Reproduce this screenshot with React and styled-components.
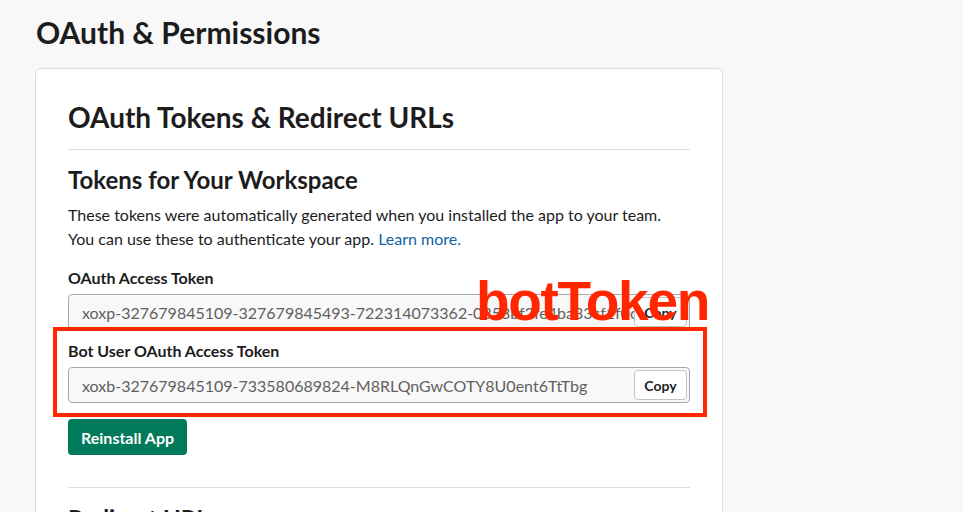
import styled, { createGlobalStyle } from 'styled-components';

const Global = createGlobalStyle`
  html, body {
    margin: 0;
    background: #f8f8f8;
  }
  body {
    font-family: Lato, "Noto Sans", sans-serif;
    color: #1d1c1d;
    -webkit-font-smoothing: antialiased;
  }
`;

const Page = styled.div`
  padding: 12px 36px 0 35px;
  height: 512px;
  box-sizing: border-box;
  overflow: hidden;
`;

const Title = styled.h1`
  margin: 0 0 16px 1px;
  font-size: 30px;
  font-weight: 700;
  line-height: 40px;
  letter-spacing: 0;
`;

const Card = styled.div`
  width: 688px;
  box-sizing: border-box;
  background: #fff;
  border: 1px solid #dddddd;
  border-radius: 6px;
  padding: 26px 32px 0 32px;
`;

const CardTitle = styled.h2`
  margin: 0;
  font-size: 28px;
  font-weight: 700;
  line-height: 44px;
  padding-bottom: 10px;
  border-bottom: 1px solid #dddddd;
`;

const SectionTitle = styled.h3`
  margin: 13px 0 6px;
  font-size: 24px;
  font-weight: 700;
  line-height: 34px;
`;

const Text = styled.p`
  margin: 0 0 16px;
  font-size: 16px;
  line-height: 24px;
`;

const Link = styled.a`
  color: #1264a3;
  text-decoration: none;
`;

const Field = styled.div`
  position: relative;
  margin-bottom: ${p => p.$gap || 0}px;
`;

const Label = styled.div`
  font-size: 16px;
  font-weight: 700;
  line-height: 22px;
  margin-bottom: 5px;
`;

const TokenBox = styled.div`
  position: relative;
  height: 36px;
  box-sizing: border-box;
  border: 1px solid #a8a8a8;
  border-radius: 4px;
  background: #f8f8f8;
  display: flex;
  align-items: center;
  padding: 0 70px 0 13px;
  overflow: hidden;
`;

const TokenText = styled.span`
  font-size: 16px;
  color: #616061;
  white-space: nowrap;
`;

const CopyButton = styled.button`
  position: absolute;
  right: 2px;
  top: 2px;
  height: 30px;
  width: 53px;
  border: 1px solid #c4c4c4;
  border-radius: 4px;
  background: #fff;
  font-family: Lato, sans-serif;
  font-size: 14px;
  font-weight: 700;
  color: #1d1c1d;
  padding: 0;
`;

const Highlight = styled.div`
  position: absolute;
  left: -15px;
  right: -17px;
  top: -13px;
  bottom: -14px;
  border: 4px solid #ff2600;
  pointer-events: none;
`;

const Note = styled.div`
  position: absolute;
  left: 408px;
  top: -66px;
  font-family: "Liberation Sans", Arial, sans-serif;
  font-weight: 700;
  font-size: 55px;
  line-height: 55px;
  letter-spacing: -1.3px;
  color: #ff2600;
  white-space: nowrap;
`;

const PrimaryButton = styled.button`
  margin-top: 16px;
  height: 36px;
  padding: 0 13px;
  border: none;
  border-radius: 4px;
  background: #007a5a;
  color: #fff;
  font-family: Lato, sans-serif;
  font-size: 16px;
  font-weight: 700;
`;

const Divider = styled.hr`
  margin: 32px 0 0;
  border: none;
  border-top: 1px solid #dddddd;
`;

const NextTitle = styled.h3`
  margin: 14px 0 0;
  font-size: 24px;
  font-weight: 700;
  line-height: 34px;
`;

const Token = ({ value }) => (
  <TokenBox>
    <TokenText>{value}</TokenText>
    <CopyButton>Copy</CopyButton>
  </TokenBox>
);

export default function App() {
  return (
    <Page>
      <Global />
      <Title>OAuth &amp; Permissions</Title>
      <Card>
        <CardTitle>OAuth Tokens &amp; Redirect URLs</CardTitle>
        <SectionTitle>Tokens for Your Workspace</SectionTitle>
        <Text>
          These tokens were automatically generated when you installed the app to your team.
          <br />
          You can use these to authenticate your app. <Link href="#">Learn more.</Link>
        </Text>
        <Field $gap={10}>
          <Label>OAuth Access Token</Label>
          <Token value="xoxp-327679845109-327679845493-722314073362-0353bf2fe4ba33cf1f0c8d2a" />
        </Field>
        <Field>
          <Label>Bot User OAuth Access Token</Label>
          <Token value="xoxb-327679845109-733580689824-M8RLQnGwCOTY8U0ent6TtTbg" />
          <Highlight />
          <Note>botToken</Note>
        </Field>
        <PrimaryButton>Reinstall App</PrimaryButton>
        <Divider />
        <NextTitle>Redirect URLs</NextTitle>
      </Card>
    </Page>
  );
}
